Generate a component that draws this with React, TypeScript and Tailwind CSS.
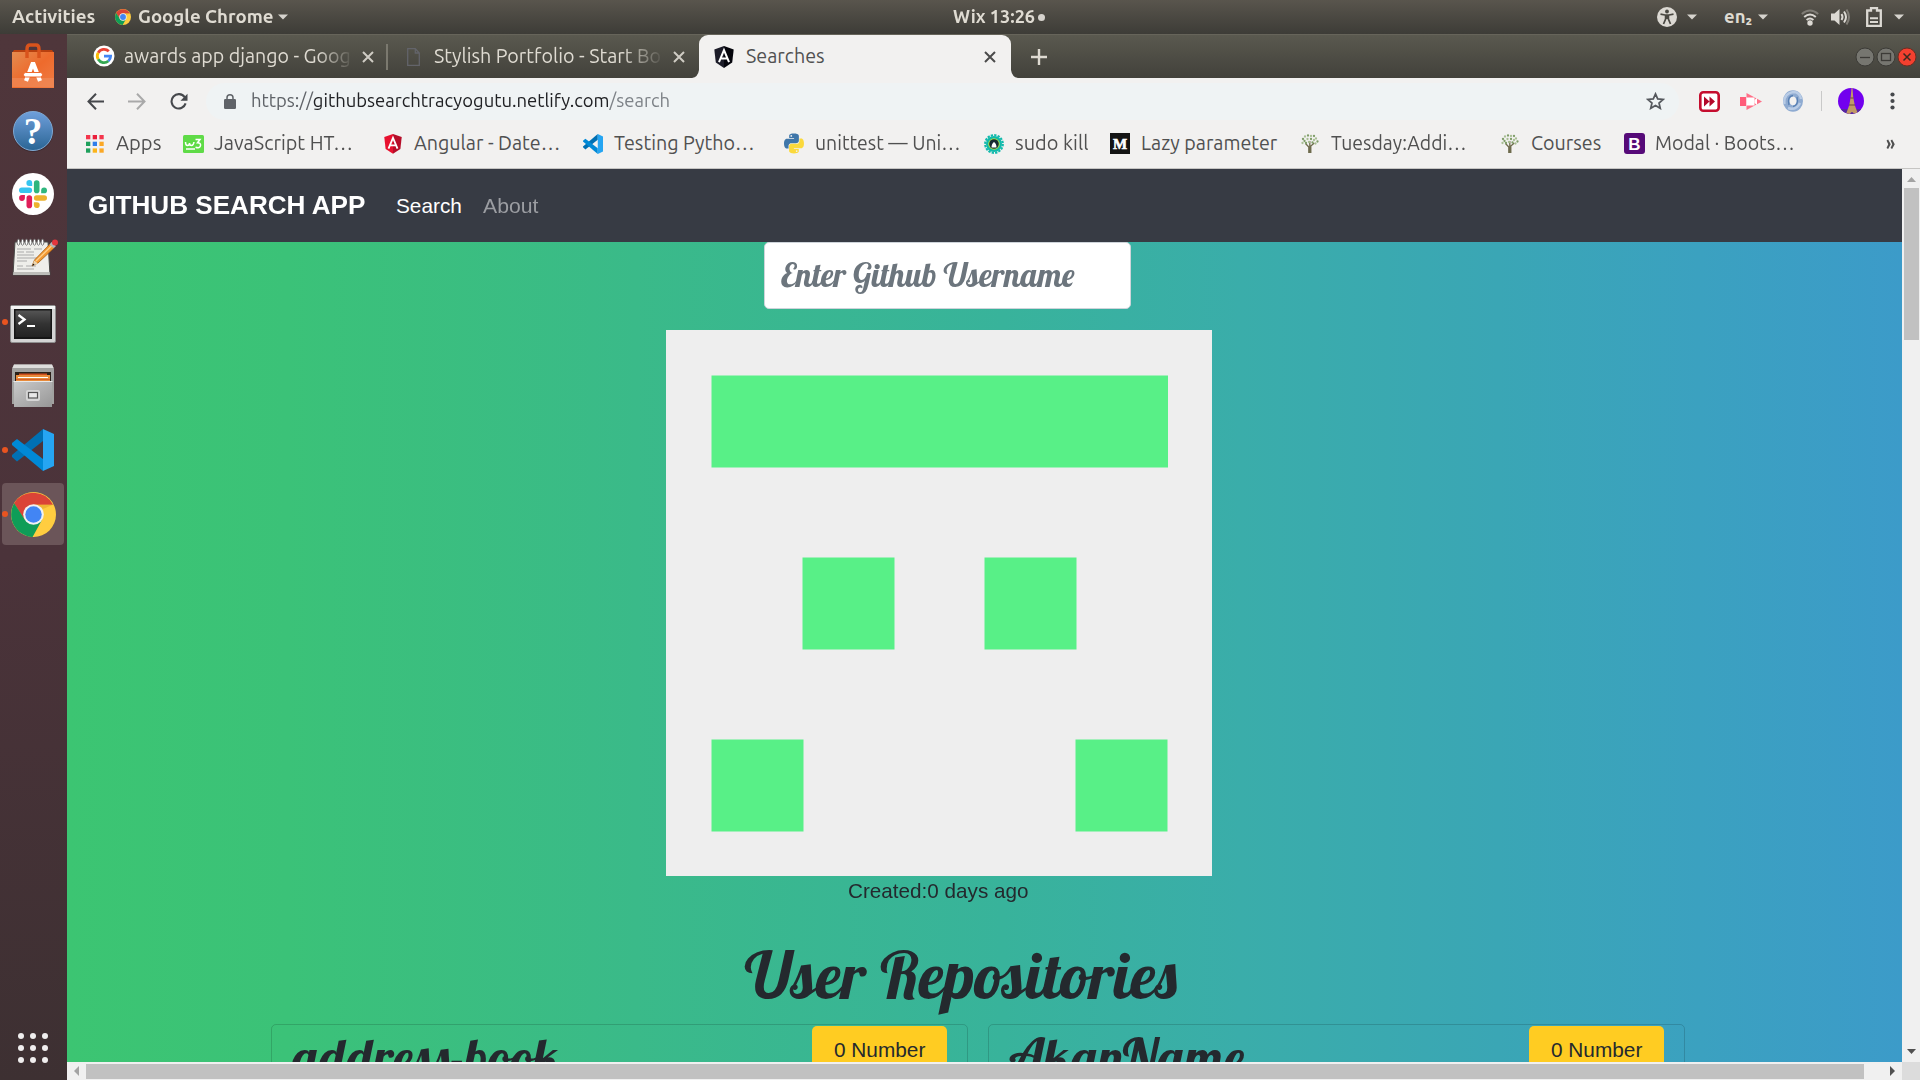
import React, { useLayoutEffect, useRef, useState } from "react";

/* One line of text condensed or widened to fill a known width. */
function Fit({ w, className = "", children }: { w: number; className?: string; children: React.ReactNode }) {
  const ref = useRef<HTMLSpanElement>(null);
  const [scale, setScale] = useState(1);
  useLayoutEffect(() => {
    if (ref.current) setScale(w / ref.current.offsetWidth);
  }, [w]);
  return (
    <span className={"block shrink-0 whitespace-nowrap " + className} style={{ width: w }}>
      <span ref={ref} className="inline-block origin-left" style={{ transform: `scaleX(${scale})` }}>
        {children}
      </span>
    </span>
  );
}

const Caret = ({ className = "" }) => (
  <svg className={"shrink-0 " + className} width="10" height="6" viewBox="0 0 10 6"><path d="M0 .5h10L5 5.5z" fill="#d6d3cd" /></svg>
);

const ChromeIcon = ({ size }: { size: number }) => (
  <svg className="shrink-0" width={size} height={size} viewBox="0 0 48 48">
    <circle cx="24" cy="24" r="24" fill="#ffcd40" />
    <path d="M3.2 12A24 24 0 0 1 44.8 13.5H24L14.5 29.5z" fill="#db4437" />
    <path d="M3.4 12A24 24 0 0 0 23 48l10-18.2-9 4.7-9.2-5z" fill="#0f9d58" />
    <path d="M24 13.5h20.8L34 18z" fill="#e2a62b" opacity=".6" />
    <circle cx="24" cy="24" r="11" fill="#f1f1f1" />
    <circle cx="24" cy="24" r="8.8" fill="#4285f4" />
  </svg>
);

const StoreIcon = () => (
  <svg width="44" height="46" viewBox="0 0 44 46">
    <defs><linearGradient id="bag" x1="0" y1="0" x2="1" y2="1"><stop offset="0" stopColor="#e48c50" /><stop offset=".5" stopColor="#ee6a2c" /><stop offset="1" stopColor="#ef7d45" /></linearGradient></defs>
    <path d="M3 7h38l2 3H1z" fill="#b8400f" />
    <rect x="1" y="9" width="42" height="36" fill="url(#bag)" />
    <rect x="1" y="35" width="42" height="9" fill="#f08a58" opacity=".7" />
    <path d="M16 15V6q0-4 3-4h6q3 0 3 4v9" fill="none" stroke="#d9531c" strokeWidth="3.4" />
    <path d="M15 38l6.500-17h1L29 38" fill="none" stroke="#fff" strokeWidth="4.2" />
    <rect x="12.500" y="29.500" width="19" height="4.500" rx="2.2" fill="#fff" stroke="#ef6c30" />
  </svg>
);

const HelpIcon = () => (
  <svg className="mt-[2px]" width="42" height="42" viewBox="0 0 42 42">
    <defs><linearGradient id="help" x1="0" y1="0" x2="0" y2="1"><stop offset="0" stopColor="#6f9fdb" /><stop offset="1" stopColor="#2a6594" /></linearGradient></defs>
    <circle cx="21" cy="22" r="20" fill="#2b1b20" opacity=".4" />
    <circle cx="21" cy="21" r="19.5" fill="url(#help)" stroke="#7fa9d3" />
    <text x="21" y="34" textAnchor="middle" fontFamily="Liberation Serif, serif" fontWeight="700" fontSize="37" fill="#fff">?</text>
  </svg>
);

const SlackIcon = () => (
  <svg width="42" height="42" viewBox="0 0 42 42" fill="none" strokeWidth="5.6" strokeLinecap="round">
    <circle cx="21" cy="21" r="21" fill="#fff" />
    <path d="M9.800 17.300h7.500" stroke="#36c5f0" /><path d="M20.200 12.900h-3a2.900 2.900 0 1 1 3-2.900z" fill="#36c5f0" />
    <path d="M24.7 10v7.4" stroke="#2eb67d" /><path d="M29.2 20.3v-3a2.9 2.9 0 1 1 2.9 3z" fill="#2eb67d" />
    <path d="M24.7 25h7.5" stroke="#ecb22e" /><path d="M21.9 29.2h3a2.9 2.9 0 1 1-3 2.9z" fill="#ecb22e" />
    <path d="M17.3 25v7.4" stroke="#e01e5a" /><path d="M12.9 22.1v3a2.9 2.9 0 1 1-2.9-3z" fill="#e01e5a" />
  </svg>
);

const NotesIcon = () => (
  <svg className="ml-[3px]" width="46" height="40" viewBox="0 0 46 40">
    <path d="M3 4h33l2 33H1z" fill="#eeeeea" stroke="#4a4a48" />
    <path d="M1.5 34h36l.5 3H1z" fill="#bdbdb9" />
    <path d="M5 11h14M22 11h8M5 14h7M14 14h8M5 17h17M5 20h21M5 23h10M5 28h6M14 28h10M5 31h17" stroke="#aaa" strokeWidth="1" />
    {[6, 10, 14, 18, 22, 26, 30].map((x) => <ellipse key={x} cx={x + 0.5} cy="4.2" rx="1.4" ry="3" fill="#fff" stroke="#666" strokeWidth=".9" />)}
    <path d="M20 28l2.5-6L38 6l4 4-16 15z" fill="#f39a32" stroke="#a65d12" strokeWidth=".8" />
    <path d="M24 23L39.5 8" stroke="#ffd08a" strokeWidth="1.3" />
    <path d="M20 28l2.3-5.6 3.6 3z" fill="#ecd6b0" /><path d="M20 28l1.2-2.6 1.4 1.4z" fill="#111" />
    <path d="M37.5 6.5l2-2.5 4.5 4-2.3 2.3z" fill="#b5b5b5" /><circle cx="43" cy="4.5" r="3" fill="#e5353d" />
  </svg>
);

const TerminalIcon = () => (
  <svg className="mt-[3px]" width="46" height="38" viewBox="0 0 46 38">
    <defs><linearGradient id="scr" x1="0" y1="0" x2="0" y2="1"><stop offset="0" stopColor="#555" /><stop offset=".5" stopColor="#333" /><stop offset="1" stopColor="#222" /></linearGradient></defs>
    <rect x=".5" y=".5" width="45" height="37" rx="1.5" fill="#d4d4d4" stroke="#8e8e8e" />
    <path d="M1 1h44v3H1z" fill="#f5f5f5" />
    <rect x="4" y="4" width="38" height="30" fill="#151515" />
    <rect x="5.5" y="5.5" width="35" height="26.500" fill="url(#scr)" />
    <path d="M8.500 10l6 4.500-6 4.500" fill="none" stroke="#fff" strokeWidth="2.300" /><path d="M17 21h8" stroke="#fff" strokeWidth="2" />
  </svg>
);

const FilesIcon = () => (
  <svg width="42" height="44" viewBox="0 0 42 44">
    <defs><linearGradient id="cab" x1="0" y1="0" x2="1" y2="1"><stop offset="0" stopColor="#c9c9c9" /><stop offset="1" stopColor="#979797" /></linearGradient></defs>
    <path d="M2 .5h38l2 4V40H0V4.500z" fill="#a2a2a0" /><path d="M2 .5h38l1.500 3.500H.5z" fill="#dededc" />
    <rect x="3" y="8" width="36" height="10" fill="#2b2018" />
    <rect x="7" y="9.500" width="28" height="3" fill="#ce4e1e" />
    <rect x="4" y="11" width="34" height="8" fill="#e88b3b" /><path d="M6 13.500h30" stroke="#fff" /><path d="M4 15.500h34" stroke="#d6602a" />
    <path d="M2 18h38v25H2z" fill="url(#cab)" /><path d="M1.500 17.500h39" stroke="#e8e8e8" />
    <rect x="14" y="26" width="14" height="11" rx="2" fill="#d6d6d6" /><rect x="16.500" y="28.500" width="9" height="5.500" fill="#e8e8e8" stroke="#555" strokeWidth="1.200" />
  </svg>
);

const CodeIcon = ({ size }: { size: number }) => (
  <svg width={size} height={size} viewBox="0 0 42 42">
    <path d="M31 0v12L5 32.500 0 28v-2z" fill="#0070b3" />
    <path d="M31 42V30L5 10 0 14v2z" fill="#0089d6" />
    <path d="M31 0l11 5v32l-11 5z" fill="#26a5f2" />
  </svg>
);

const dockItems = [
  { icon: <StoreIcon />, open: false, active: false },
  { icon: <HelpIcon />, open: false, active: false },
  { icon: <SlackIcon />, open: false, active: false },
  { icon: <NotesIcon />, open: false, active: false },
  { icon: <TerminalIcon />, open: true, active: false },
  { icon: <FilesIcon />, open: false, active: false },
  { icon: <CodeIcon size={42} />, open: true, active: false },
  { icon: <ChromeIcon size={45} />, open: true, active: true },
];

const GoogleIcon = () => (
  <svg className="shrink-0" width="22" height="22" viewBox="0 0 22 22" fill="none" strokeWidth="2.800">
    <circle cx="11" cy="11" r="10.500" fill="#fff" />
    <path d="M15.800 6.300A6.700 6.700 0 0 0 5.200 7.700" stroke="#ea4335" /><path d="M5.200 7.700a6.700 6.700 0 0 0 0 6.600" stroke="#fbbc05" />
    <path d="M5.200 14.300a6.700 6.700 0 0 0 10.200 1.700" stroke="#34a853" /><path d="M15.400 16a6.700 6.700 0 0 0 2.200-4.800h-6.600" stroke="#4285f4" />
  </svg>
);

const Shield = ({ left, right, w }: { left: string; right: string; w: number }) => (
  <svg className="shrink-0" width={w} height={w * 1.1} viewBox="0 0 20 22">
    <path d="M10 0L.3 3.400l1.500 13.200L10 22z" fill={left} /><path d="M10 0l9.700 3.400-1.500 13.200L10 22z" fill={right} />
    <path d="M5 16.200l5-12 5 12M7.200 12.600h5.600" fill="none" stroke="#fff" strokeWidth="2" />
  </svg>
);

const Cross = ({ color }: { color: string }) => (
  <svg className="shrink-0" width="12" height="12" viewBox="0 0 12 12"><path d="M1 1l10 10M11 1L1 11" stroke={color} strokeWidth="2" /></svg>
);

const AppsIcon = () => (
  <svg width="18" height="18" viewBox="0 0 18 18">
    {["#f4364c", "#ea1f3b", "#f4364c", "#1fa05c", "#2f7de9", "#fba826", "#1fa05c", "#fbb41a", "#fba826"].map((c, i) => (
      <rect key={i} x={(i % 3) * 6.7} y={Math.floor(i / 3) * 6.7} width="4.300" height="4.300" fill={c} />
    ))}
  </svg>
);
const W3Icon = () => (
  <svg width="21" height="18" viewBox="0 0 21 18"><rect width="21" height="18" rx="1.500" fill="#5fdb47" />
    <path d="M2.500 7q0 3.500 2 3.500T6.500 8q0 2.500 2 2.500T11 7M12.500 4.500h4.500l-2.500 3.200q3.500 0 3 3t-5 1.500M3 14h9" fill="none" stroke="#fff" strokeWidth="1.500" /></svg>
);
const PY = "M63.400 0C31 0 33 14 33 14v14.600h31v4.400H20.800S0 30.600 0 63.400 18 95 18 95h10.800V79.800s-.6-18 17.800-18h30.700s17.200.3 17.200-16.700V17S97 0 63.400 0zM46.300 9.800a5.600 5.600 0 1 1 0 11.200 5.600 5.600 0 0 1 0-11.200z";
const PythonIcon = () => (
  <svg className="-ml-px" width="20" height="21" viewBox="0 0 127 127"><path d={PY} fill="#3f76a9" /><path d={PY} fill="#fbd93c" transform="rotate(180 63.400 63.400)" /></svg>
);
const GearIcon = () => (
  <svg width="20" height="20" viewBox="0 0 20 20"><circle cx="10" cy="10" r="8.800" fill="none" stroke="#10b9ab" strokeWidth="2.200" strokeDasharray="2.300 1.150" />
    <circle cx="10" cy="10" r="8" fill="#10b9ab" /><circle cx="10" cy="10" r="5.800" fill="#a9e34e" /><circle cx="10" cy="10" r="4.800" fill="#172b33" /><path d="M7.500 13.500q0-4 2.500-5.500 2.500 1.500 2.500 5.500z" fill="#fff" /></svg>
);
const MediumIcon = () => (
  <svg width="20" height="21" viewBox="0 0 20 21"><rect width="20" height="21" fill="#141414" /><text x="10" y="15.500" textAnchor="middle" fontFamily="Liberation Serif, serif" fontWeight="700" fontSize="15" fill="#fff" stroke="#fff" strokeWidth=".6">M</text></svg>
);
const TreeIcon = () => (
  <svg width="18" height="20" viewBox="0 0 18 20">
    <path d="M7.800 19V13L4.500 9.500M9.800 19V12l3.500-3M8.800 19V7" stroke="#6e6b4c" strokeWidth="1.300" fill="none" />
    {[[2, 5], [4, 2.500], [7, 1.500], [10, 2], [13, 2], [15, 4.500], [16.500, 7.500], [13, 6], [10, 5], [6.500, 5], [3.500, 7], [1.500, 9], [5, 9], [8, 8], [11.500, 8.500], [14.500, 9.500]].map(([x, y], i) => (
      <circle key={i} cx={x} cy={y} r="1.150" fill={i % 2 ? "#a9bf94" : "#7f9d68"} />
    ))}
  </svg>
);
const BootIcon = () => (
  <svg width="21" height="21" viewBox="0 0 21 21"><rect width="21" height="21" rx="3" fill="#560a78" /><text x="10.500" y="16.500" textAnchor="middle" fontFamily="Liberation Sans, sans-serif" fontWeight="700" fontSize="17" fill="#fff">B</text></svg>
);

const bookmarks = [
  { box: "w-[98px]", icon: <AppsIcon />, text: "Apps", w: 45 },
  { box: "w-[200px]", icon: <W3Icon />, text: "JavaScript HT…", w: 139 },
  { box: "w-[200px]", icon: <Shield left="#e8102e" right="#b60e29" w={18} />, text: "Angular - Date…", w: 146 },
  { box: "w-[201px]", icon: <CodeIcon size={20} />, text: "Testing Pytho…", w: 141 },
  { box: "w-[200px]", icon: <PythonIcon />, text: "unittest — Uni…", w: 146 },
  { box: "w-[126px]", icon: <GearIcon />, text: "sudo kill", w: 73 },
  { box: "w-[190px]", icon: <MediumIcon />, text: "Lazy parameter", w: 136 },
  { box: "w-[200px]", icon: <TreeIcon />, text: "Tuesday:Addi…", w: 136 },
  { box: "w-[124px]", icon: <TreeIcon />, text: "Courses", w: 70 },
  { box: "w-[180px]", icon: <BootIcon />, text: "Modal · Boots…", w: 140 },
];

function TopBar() {
  return (
    <header className="flex h-[34px] shrink-0 items-center bg-linear-to-b from-[#59554d] to-[#3d3c37] text-[18.5px] font-bold text-[#dfdbd2]">
      <Fit w={83} className="ml-3">Activities</Fit>
      <span className="ml-5"><ChromeIcon size={16} /></span>
      <Fit w={135} className="ml-[7px]">Google Chrome</Fit>
      <Caret className="ml-[5px]" />
      <Fit w={82} className="ml-[665px]">Wix 13:26</Fit>
      <span className="ml-[3px] size-[7px] rounded-full bg-[#d6d3cd]" />
      <svg className="ml-[612px] shrink-0" width="20" height="20" viewBox="0 0 20 20">
        <circle cx="10" cy="10" r="10" fill="#dcd9d3" /><circle cx="10" cy="4.500" r="1.900" fill="#4a4842" />
        <path d="M3.500 7.200l4.500.8h4l4.500-.8M8.600 8v4L6.500 17M11.400 8v4l2.100 5M10 7.500V12" stroke="#4a4842" strokeWidth="1.700" fill="none" />
      </svg>
      <Caret className="ml-[10px]" />
      <Fit w={28} className="ml-[27px]">en₂</Fit>
      <Caret className="ml-[6px]" />
      <svg className="ml-[33px] shrink-0" width="18" height="17" viewBox="0 0 18 17" fill="none" strokeWidth="2">
        <path d="M.8 5Q9-2 17.200 5" stroke="#807d76" /><path d="M3.200 8Q9 3 14.800 8M5.600 11Q9 8 12.400 11" stroke="#dcd9d3" /><circle cx="9" cy="14" r="2.700" fill="#dcd9d3" />
      </svg>
      <svg className="ml-3 shrink-0" width="20" height="18" viewBox="0 0 20 18" fill="none" strokeWidth="2">
        <path d="M0 5.500h3.500L8.500 1v16l-5-4.500H0z" fill="#dcd9d3" /><path d="M10.500 6q2 3 0 6M13 3.500q4 5.500 0 11" stroke="#dcd9d3" /><path d="M15.500 1.500q5 7.500 0 15" stroke="#807d76" />
      </svg>
      <svg className="ml-[15px] shrink-0" width="16" height="20" viewBox="0 0 16 20">
        <path d="M1.200 3.500H5V1.200h6v2.300h3.800v15.300H1.200z" fill="none" stroke="#dcd9d3" strokeWidth="2.300" /><path d="M4 11.200h8M4 15h8" stroke="#dcd9d3" strokeWidth="2" />
      </svg>
      <Caret className="ml-3" />
    </header>
  );
}

function Dock() {
  return (
    <aside className="flex w-[67px] shrink-0 flex-col bg-linear-to-b from-[#4f363b] via-[#4b333a] to-[#3d3032]">
      {dockItems.map((d, i) => (
        <div key={i} className="relative flex h-16 shrink-0 items-center justify-center pr-px">
          <div className={d.active ? "flex h-[62px] w-[62px] items-center justify-center rounded-[4px] bg-[#6b5559]" : "flex items-center justify-center"}>{d.icon}</div>
          {d.open && <span className="absolute top-[29px] left-[2px] size-[6px] rounded-full bg-[#e95420]" />}
        </div>
      ))}
      <div className="mt-auto mb-[17px] ml-[18px] grid w-[30px] grid-cols-3 gap-[6px]">
        {Array.from({ length: 9 }, (_, i) => <span key={i} className="size-[6px] rounded-full bg-[#f0eeee]" />)}
      </div>
    </aside>
  );
}

function TabStrip() {
  return (
    <div className="flex h-[44px] items-center border-t border-[#66645a] bg-linear-to-b from-[#5a594f] to-[#42413b] text-[19.7px] text-[#dfdbd2]">
      <div className="ml-[26px] flex items-center"><GoogleIcon />
        <div className="ml-[9px] w-[230px] overflow-hidden [mask-image:linear-gradient(to_right,#000_84%,transparent)]"><Fit w={227}>awards app django - Goog</Fit></div>
      </div>
      <div className="ml-[8px] flex"><Cross color="#cfccc4" /></div>
      <span className="ml-[12px] h-[26px] w-[2px] bg-[#7b796f]" />
      <svg className="ml-[19px] shrink-0" width="13" height="18" viewBox="0 0 13 18"><path d="M.7.7h7.600l4 4.300v12.300H.7zM8.300.7V5h4" fill="none" stroke="#63646a" strokeWidth="1.300" /></svg>
      <div className="ml-[14px] w-[230px] overflow-hidden [mask-image:linear-gradient(to_right,#000_82%,transparent)]"><Fit w={227}>Stylish Portfolio - Start Bo</Fit></div>
      <div className="ml-[9px] flex"><Cross color="#cfccc4" /></div>
      <div className="ml-[7px] flex h-[43px] items-end">
        <svg className="shrink-0" width="7" height="8" viewBox="0 0 7 8"><path d="M7 0v8H0q6-1 7-8z" fill="#f2f1f0" /></svg>
        <div className="flex h-[43px] w-[312px] items-center rounded-t-[9px] bg-[#f2f1f0] pl-[15px] text-[#505050]">
          <Shield left="#1c1c28" right="#05050c" w={20} />
          <Fit w={79} className="ml-3">Searches</Fit>
          <div className="ml-auto mr-[15px] flex"><Cross color="#4b4b4b" /></div>
        </div>
        <svg className="shrink-0" width="7" height="8" viewBox="0 0 7 8"><path d="M0 0v8h7Q1 7 0 0z" fill="#f2f1f0" /></svg>
      </div>
      <svg className="ml-[13px] shrink-0" width="16" height="16" viewBox="0 0 16 16"><path d="M8 0v16M0 8h16" stroke="#dfdbd2" strokeWidth="2.400" /></svg>
      <div className="mr-[3px] ml-auto flex gap-[1px]">
        <svg width="20" height="20" viewBox="0 0 20 20"><circle cx="10" cy="10" r="9" fill="#767670" stroke="#3c3b37" /><path d="M5 10.500h10" stroke="#3c3b37" strokeWidth="1.300" /></svg>
        <svg width="20" height="20" viewBox="0 0 20 20"><circle cx="10" cy="10" r="9" fill="#767670" stroke="#3c3b37" /><rect x="5.500" y="6.500" width="9" height="7" fill="none" stroke="#3c3b37" strokeWidth="1.300" /></svg>
        <svg width="20" height="20" viewBox="0 0 20 20"><circle cx="10" cy="10" r="9" fill="#f4402f" stroke="#6d2d22" /><path d="M6.500 6.500l7 7M13.500 6.500l-7 7" stroke="#3c2a20" strokeWidth="1.500" /></svg>
      </div>
    </div>
  );
}

function Toolbar() {
  return (
    <div className="flex h-[46px] items-center bg-[#f2f1f0] text-[18.5px]">
      <svg className="ml-5 shrink-0" width="18" height="17" viewBox="0 0 18 17" fill="none" stroke="#46484c" strokeWidth="2"><path d="M17 8.500H1.500M9 .8L1.500 8.500 9 16.200" /></svg>
      <svg className="ml-[23px] shrink-0" width="18" height="17" viewBox="0 0 18 17" fill="none" stroke="#a9a9a9" strokeWidth="2"><path d="M0 8.500h16.500M9 .8l7.500 7.700L9 16.200" /></svg>
      <svg className="ml-[24px] shrink-0" width="18" height="17" viewBox="0 0 19 18"><path d="M15.500 4.500A7.600 7.600 0 1 0 16.500 11" fill="none" stroke="#46484c" strokeWidth="2.200" /><path d="M18.500.8v7.500H11z" fill="#46484c" /></svg>
      <div className="ml-[18px] flex h-[37px] w-[1473px] items-center rounded-full bg-[#eff3f4] pl-[18px]">
        <svg className="shrink-0" width="12" height="15" viewBox="0 0 12 15"><rect y="5" width="12" height="10" rx="1.200" fill="#5f6368" /><path d="M3 6V3.800a3 3 0 0 1 6 0V6" fill="none" stroke="#5f6368" strokeWidth="1.500" /></svg>
        <Fit w={419} className="ml-[15px] text-[#7d8287]"><span className="text-[#5f6368]">https://</span><span className="text-[#202124]">githubsearchtracyogutu.netlify.com</span>/search</Fit>
        <svg className="mr-[14px] ml-auto" width="19" height="18" viewBox="0 0 24 23"><path d="M12 2.500l2.800 6.400 7 .6-5.300 4.600 1.600 6.800L12 17.300l-6.100 3.600 1.600-6.800L2.200 9.500l7-.6z" fill="none" stroke="#55585d" strokeWidth="2.200" /></svg>
      </div>
      <svg className="ml-[20px] shrink-0" width="21" height="21" viewBox="0 0 21 21"><rect x="1.300" y="1.300" width="18.400" height="18.400" rx="3" fill="#fff" stroke="#c50d2e" strokeWidth="2.600" /><path d="M5 5.500l5.500 5L5 15.500zM10.500 5.500l5.500 5-5.500 5z" fill="#b3082a" /></svg>
      <svg className="ml-5 shrink-0" width="22" height="17" viewBox="0 0 22 17"><path d="M6.500 0L22 8.500 6.500 17z" fill="#ff7088" /><rect y="4" width="6" height="9" fill="#ff5c79" /><rect x="6.500" y="4.500" width="8" height="8" fill="#fff" /><path d="M14.500 7l2.500-2v7l-2.500-2z" fill="#fff" /></svg>
      <svg className="ml-5 shrink-0" width="22" height="22" viewBox="0 0 22 22" fill="none"><ellipse cx="11" cy="11" rx="6.800" ry="7.600" stroke="#8fabd1" strokeWidth="6.400" /><path d="M2.500 14Q1 4 11 2q7 0 8 7M6 18q8 3 12-5" stroke="#b9cce6" strokeWidth="2.500" /><path d="M11 5.500Q5 6 7 15M11 16.500Q17 15 15 7" stroke="#577fb3" strokeWidth="1.300" /></svg>
      <span className="ml-[17px] h-5 w-px bg-[#c9c9c9]" />
      <svg className="ml-4 shrink-0" width="26" height="26" viewBox="0 0 26 26"><clipPath id="av"><circle cx="13" cy="13" r="13" /></clipPath><g clipPath="url(#av)"><rect width="26" height="26" fill="#7200ee" /><path d="M0 21h26v5H0z" fill="#55299e" /><path d="M13.500 0h1l.7 9 1.500 8L20 26h-4q-2-4-4 0H8l3.300-9 1.400-8z" fill="#c29a66" /><path d="M11 17h6M12.300 10h3.400" stroke="#6b4b3a" /></g></svg>
      <svg className="ml-[26px] shrink-0" width="5" height="18" viewBox="0 0 5 18" fill="#46484c"><circle cx="2.500" cy="2.500" r="2.100" /><circle cx="2.500" cy="9" r="2.100" /><circle cx="2.500" cy="15.500" r="2.100" /></svg>
    </div>
  );
}

function Bookmarks() {
  return (
    <div className="flex h-[45px] items-center border-b border-[#c6c5c3] bg-[#f2f1f0] pb-[4px] pl-[17px] text-[19.7px] text-[#505050]">
      {bookmarks.map((b) => (
        <div key={b.text} className={"flex shrink-0 items-center gap-[10px] " + b.box}>
          <span className="flex w-[22px] shrink-0 items-center justify-center">{b.icon}</span>
          <Fit w={b.w}>{b.text}</Fit>
        </div>
      ))}
      <span className="ml-auto mr-[25px]"><Fit w={9} className="font-bold">»</Fit></span>
    </div>
  );
}

const cards = [
  { name: "address-book", w: 266 },
  { name: "AkanName", w: 235 },
];

function Page() {
  return (
    <main className="flex min-w-0 flex-1 flex-col overflow-hidden font-['Liberation_Sans',sans-serif]">
      <nav className="flex h-[73px] shrink-0 items-center bg-[#373b44] pl-[21px] text-[20.8px] text-white">
        <Fit w={277} className="text-[26px] font-bold">GITHUB SEARCH APP</Fit>
        <Fit w={66} className="ml-[31px]">Search</Fit>
        <Fit w={55} className="ml-[21px] text-[#9b9da2]">About</Fit>
      </nav>
      <div className="flex min-h-0 flex-1 flex-col overflow-hidden bg-[linear-gradient(90deg,#3cc572_0%,#3bc278_12%,#3aba89_31%,#38b39b_51%,#3aadaa_64%,#3aa6b5_78%,#3ba1c0_89%,#3c9bc9_100%)] text-[20.8px] text-[#24292e]">
        <div className="ml-[697px] flex h-[67px] w-[367px] shrink-0 items-center rounded-[5px] border border-[#ced4da] bg-white pl-4">
          <Fit w={293} className="font-['Lobster','Liberation_Serif',serif] text-[32.5px] leading-none text-[#6c757d]">Enter Github Username</Fit>
        </div>
        <svg className="mt-[21px] ml-[599px] shrink-0" width="546" height="546" viewBox="0 0 546 546">
          <rect width="546" height="546" fill="#eee" />
          <g fill="#58f087">
            <rect x="45.500" y="45.500" width="456.500" height="92" />
            <rect x="136.500" y="227.500" width="92" height="92" /><rect x="318.500" y="227.500" width="92" height="92" />
            <rect x="45.500" y="409.500" width="92" height="92" /><rect x="409.500" y="409.500" width="92" height="92" />
          </g>
        </svg>
        <Fit w={181} className="ml-[781px] h-[30px] leading-[30px]">Created:0 days ago</Fit>
        <h1 className="mt-[28px] ml-[678px] h-[90px] shrink-0 font-['Lobster','Liberation_Serif',serif] text-[65px] leading-[81px]"><Fit w={432}>User Repositories</Fit></h1>
        <div className="ml-[204px] flex shrink-0 gap-5">
          {cards.map((c) => (
            <section key={c.name} className="flex h-[120px] w-[697px] rounded-[5px] border border-black/15 pl-[20px]">
              <Fit w={c.w} className="font-['Lobster','Liberation_Serif',serif] text-[52px] leading-[65px]">{c.name}</Fit>
              <button className="mt-px mr-[20px] ml-auto flex h-[48px] w-[135px] items-center justify-center rounded-[5px] bg-[#ffcc22]"><Fit w={91}>0 Number</Fit></button>
            </section>
          ))}
        </div>
      </div>
    </main>
  );
}

export default function App() {
  return (
    <div className="flex h-[1080px] w-[1920px] flex-col overflow-hidden font-['Ubuntu','Noto_Sans',sans-serif]">
      <TopBar />
      <div className="flex min-h-0 flex-1">
        <Dock />
        <div className="flex min-w-0 flex-1 flex-col">
          <TabStrip />
          <Toolbar />
          <Bookmarks />
          <div className="flex min-h-0 flex-1">
            <Page />
            <div className="flex w-[18px] shrink-0 flex-col items-center bg-[#f0f0f0]">
              <svg className="mt-2 shrink-0" width="9" height="5" viewBox="0 0 9 5"><path d="M0 5h9L4.500 0z" fill="#a3a3a3" /></svg>
              <div className="mt-[6px] h-[152px] w-[15px] bg-[#c1c1c1]" />
              <svg className="mt-auto mb-[8px]" width="9" height="5" viewBox="0 0 9 5"><path d="M0 0h9L4.500 5z" fill="#505050" /></svg>
            </div>
          </div>
          <div className="flex h-[18px] shrink-0 items-center bg-[#f0f0f0]">
            <svg className="ml-[7px]" width="5" height="10" viewBox="0 0 5 10"><path d="M5 0v10L0 5z" fill="#a3a3a3" /></svg>
            <div className="ml-[7px] h-[15px] w-[1778px] bg-[#c1c1c1]" />
            <svg className="ml-auto" width="5" height="10" viewBox="0 0 5 10"><path d="M0 0v10l5-5z" fill="#505050" /></svg>
            <div className="ml-[7px] h-full w-[18px] bg-[#dcdcdc]" />
          </div>
        </div>
      </div>
    </div>
  );
}
